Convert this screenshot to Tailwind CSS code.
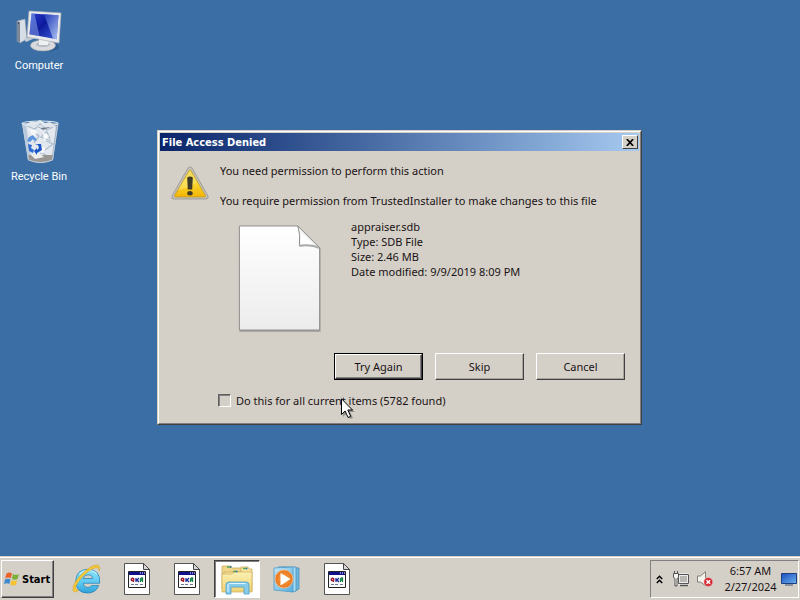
<!DOCTYPE html>
<html lang="en">
<head>
<meta charset="utf-8">
<meta name="viewport" content="width=device-width, initial-scale=1">
<title>File Access Denied</title>
<script src="https://cdn.jsdelivr.net/npm/@tailwindcss/browser@4"></script>
</head>
<body class="flex min-h-screen flex-col overflow-hidden bg-[#3a6ea5] font-['Noto_Sans',sans-serif] text-[11px] leading-[15px] text-[#1a1214]">

<svg class="absolute h-0 w-0" aria-hidden="true">
  <defs>
    <linearGradient id="page" x1="0" y1="0" x2="0" y2="1"><stop offset="0" stop-color="#fff"/><stop offset="1" stop-color="#ececed"/></linearGradient>
    <linearGradient id="screen" x1="0" y1="0" x2="1" y2="1"><stop offset="0" stop-color="#2a3fd0"/><stop offset=".45" stop-color="#0c1a9c"/><stop offset="1" stop-color="#3e62dc"/></linearGradient>
    <linearGradient id="shine" x1="0" y1="0" x2="1" y2="1"><stop offset="0" stop-color="#2848c8"/><stop offset="1" stop-color="#d5e6fb"/></linearGradient>
    <linearGradient id="warn" x1="0" y1="0" x2="0" y2="1"><stop offset="0" stop-color="#e9c83a"/><stop offset=".5" stop-color="#fbd630"/><stop offset="1" stop-color="#f2b405"/></linearGradient>
    <linearGradient id="glass" x1="0" y1="0" x2="1" y2="0"><stop offset="0" stop-color="#b9c9da"/><stop offset=".5" stop-color="#e8eef4"/><stop offset="1" stop-color="#98a9bb"/></linearGradient>
    <linearGradient id="ie" x1="0" y1="0" x2="0" y2="1"><stop offset="0" stop-color="#8de2fa"/><stop offset=".6" stop-color="#5cc8f0"/><stop offset="1" stop-color="#2f9fd8"/></linearGradient>
    <linearGradient id="folder" x1="0" y1="0" x2="0" y2="1"><stop offset="0" stop-color="#fdf0b4"/><stop offset="1" stop-color="#eed273"/></linearGradient>
    <linearGradient id="media" x1="0" y1="0" x2="1" y2="1"><stop offset="0" stop-color="#c4e8f8"/><stop offset="1" stop-color="#56aede"/></linearGradient>
    <linearGradient id="mini" x1="0" y1="0" x2="1" y2="1"><stop offset="0" stop-color="#1b4ec0"/><stop offset="1" stop-color="#6ab2ee"/></linearGradient>
    <radialGradient id="orange"><stop offset="0" stop-color="#f9a64d"/><stop offset="1" stop-color="#e8751a"/></radialGradient>
    <symbol id="script-file" viewBox="0 0 26 32">
      <path d="M.5.5h19l6 6v25H.5z" fill="#fff" stroke="#555"/>
      <path d="M19.500.5v6h6z" fill="#d8d8d8" stroke="#444"/>
      <path d="M4.500 8.500h17v16h-17z" fill="#fff" stroke="#222"/>
      <path d="M5 9h16v3H5z" fill="#10108a"/>
      <path d="M16 10h1m1 0h1m1 0h1" stroke="#fff"/>
      <circle cx="8.500" cy="16.500" r="1.300" fill="none" stroke="#a31828" stroke-width="1.400"/>
      <path d="M9.500 15v4" stroke="#a31828" stroke-width="1.200"/>
      <path d="M12 15v4m3-4-2 2 2 2" fill="none" stroke="#152898" stroke-width="1.300"/>
      <path d="M16.500 19v-3l1-1h1v4m-2-2h2" fill="none" stroke="#158048" stroke-width="1.300"/>
      <path d="M7 21.500h3m1 0h3m2 0h3" stroke="#6878a0"/>
    </symbol>
  </defs>
</svg>

<main class="relative flex-1">
  <nav class="flex w-[78px] flex-col gap-[38px] pt-2 text-center font-[Roboto,sans-serif] text-white" aria-label="Desktop">
    <a href="#computer" class="flex flex-col items-center gap-[2px]">
      <svg class="h-12 w-12" viewBox="0 0 48 48" aria-hidden="true">
        <path d="m2 13 8-2 2 20-7 4-3-2z" fill="#d7dde5" stroke="#8b98aa" stroke-width=".6"/>
        <path d="m2 13 3 1v21l-3-2z" fill="#7c8899"/>
        <path d="m3 15 1 .3" stroke="#222"/>
        <path d="m9 31 8-3 3 2-9 4z" fill="#c3cbd4"/>
        <ellipse cx="31" cy="39" rx="13" ry="4.500" fill="#234f80" opacity=".55"/>
        <ellipse cx="28" cy="37.500" rx="12.500" ry="5.500" fill="#d9dadd" stroke="#a3a9b0" stroke-width=".6"/>
        <ellipse cx="28" cy="36.500" rx="7" ry="2.500" fill="#b5bbc3"/>
        <path d="m24 29 10 2-1 6h-9z" fill="#eef0f2"/>
        <path d="m14 3 32 2-2 30-32-6z" fill="#e8e9ec" stroke="#aeb3bd" stroke-width=".7"/>
        <path d="m16.500 5.500 27 1.800-1.800 24-27.200-5z" fill="url(#screen)"/>
        <path d="m29 6.300 14.500 1-1.800 24-3.700-.7z" fill="url(#shine)" opacity=".75"/>
        <path d="m16.500 5.500 3 .2 5 22.400-10-1.800z" fill="#8fb0f0" opacity=".5"/>
      </svg>
      <span>Computer</span>
    </a>
    <a href="#recycle-bin" class="flex flex-col items-center gap-[2px]">
      <svg class="mt-2 ml-[3px] h-12 w-12" viewBox="0 0 48 48" aria-hidden="true">
        <path d="m5 4 36 0-5 37q-12 6-25 0z" fill="url(#glass)" opacity=".92"/>
        <path d="M9 6q4-5 10-3l4-2 5 3 5-1 6 5-4 28q-10 5-21 0z" fill="#e3e8ee"/>
        <path d="m10 7 8 3 5-5 7 6 6-3M30 12l-6 6 10 4m-20-10 8 5-5 7m12-2 7 3-8 6m2-18 3 7m-16 19 8-5 7 4" fill="none" stroke="#aebdcc" stroke-width="1.300"/>
        <path d="m17 5 7 4 10-1-8 3z" fill="#707b8d"/>
        <path d="m12 10 8 2-3 8zm14 3 6 4-5 5zm-4 14 7 2-4 6z" fill="#fff" opacity=".8"/>
        <path d="m11 36 25 0-.5 5q-12 5-24 0z" fill="#9a9694"/>
        <path d="m14 36 8-2 5 4-9 2z" fill="#eee"/>
        <path d="m12 18 4-2 4 5-3 1-1-2-3 3-3-1z" fill="#5c94de"/>
        <path d="m18 25 6 0 1 6-5 3v2l-3-4 3-3 0 2 2-2-1-3z" fill="#1b55c8"/>
        <path d="m11 25 4 1-1 3 3 2-1 3-4-2z" fill="#2e6cd3"/>
        <ellipse cx="23" cy="4.500" rx="18" ry="2.500" fill="none" stroke="#dce6ef" stroke-width="1.200"/>
        <path d="m5.500 5 6 36q12 5 24 0L41 5" fill="none" stroke="#c3d0dc"/>
      </svg>
      <span>Recycle Bin</span>
    </a>
  </nav>

  <section role="dialog" aria-labelledby="dlg-title" class="absolute top-[130px] left-[157px] w-[485px] border border-t-[#d4d0c8] border-r-[#404040] border-b-[#404040] border-l-[#d4d0c8] bg-[#d4d0c8]">
    <div class="border border-t-white border-r-[#808080] border-b-[#808080] border-l-white p-px">
      <header class="flex h-[18px] items-center justify-between bg-linear-to-r from-[#0a246a] to-[#a6caf0] pr-px pl-[2px]">
        <h1 id="dlg-title" class="font-['DejaVu_Sans_Condensed','Noto_Sans',sans-serif] text-[11px] font-bold text-white">File Access Denied</h1>
        <button type="button" aria-label="Close" class="flex h-[14px] w-4 items-center justify-center border border-t-white border-r-[#404040] border-b-[#404040] border-l-white bg-[#d4d0c8]">
          <svg class="h-[7px] w-2" viewBox="0 0 8 7" aria-hidden="true"><path d="m.8 0 6.400 7M7.200 0 .8 7" stroke="#000" stroke-width="1.700"/></svg>
        </button>
      </header>
      <div class="flex px-[11px] pt-[12px] pb-[14px]">
        <svg class="mt-[2px] h-[36px] w-[38px] shrink-0" viewBox="0 0 38 36" aria-hidden="true">
          <path d="M17 3q2-2.500 4 0l16 28q1 3-2 3H3q-3 0-2-3z" fill="#c4c3bc" stroke="#94928a" stroke-width=".8"/>
          <path d="M18 5.500q1-1.500 2 0l14.500 25q.5 1.500-1 1.500h-29q-1.500 0-1-1.500z" fill="url(#warn)" stroke="#b8902a" stroke-width=".7"/>
          <path d="m19 5 7 12q-8 6-19 8z" fill="#fff3a0" opacity=".35"/>
          <path d="M16.200 12.500q2.800-1.800 5.600 0l-.6 12h-4.400z" fill="#3f3a27"/>
          <ellipse cx="19" cy="28.300" rx="2.700" ry="2.200" fill="#3f3a27"/>
        </svg>
        <div class="ml-[11px] flex-1">
          <p>You need permission to perform this action</p>
          <p class="mt-[15px]">You require permission from TrustedInstaller to make changes to this file</p>
          <div class="mt-[11px] flex gap-[29px] pl-[18px]">
            <svg class="mt-[6px] h-[109px] w-[84px] shrink-0" viewBox="0 0 84 110" aria-hidden="true">
              <path d="M1 2h60l22 22v84H1z" fill="#77756f" opacity=".45"/>
              <path d="M1 1h59l22 22v83H1z" fill="url(#page)" stroke="#8c8c8a"/>
              <path d="M60 1q3 9 1.500 20Q73 19.500 82 23z" fill="#f5f5f5" stroke="#8c8c8a"/>
              <path d="M63 8v12q6-1 13 0z" fill="#fff"/>
              <path d="M61.500 21q11-1.500 20 2" fill="none" stroke="#aaa" stroke-width="2"/>
            </svg>
            <div>
              <p>appraiser.sdb</p>
              <p>Type: SDB File</p>
              <p>Size: 2.46 MB</p>
              <p>Date modified: 9/9/2019 8:09 PM</p>
            </div>
          </div>
          <div class="mt-[19px] flex justify-end gap-3 pr-[3px]">
            <button type="button" class="h-[27px] w-[89px] border border-black"><span class="flex h-full items-center justify-center border border-t-white border-r-[#404040] border-b-[#404040] border-l-white shadow-[inset_-1px_-1px_#808080]">Try Again</span></button>
            <button type="button" class="h-[27px] w-[89px] border border-t-white border-r-[#404040] border-b-[#404040] border-l-white shadow-[inset_-1px_-1px_#a8a59f]">Skip</button>
            <button type="button" class="h-[27px] w-[89px] border border-t-white border-r-[#404040] border-b-[#404040] border-l-white shadow-[inset_-1px_-1px_#a8a59f]">Cancel</button>
          </div>
          <div class="mt-[13px] -ml-[2px] flex items-center gap-[5px]">
            <input id="all" type="checkbox" class="h-[13px] w-[13px] appearance-none border border-t-[#606060] border-r-white border-b-white border-l-[#606060] bg-[#d4d0c8] shadow-[inset_1px_1px_#808080] checked:bg-[#404040]">
            <label for="all">Do this for all current items (5782 found)</label>
          </div>
        </div>
      </div>
    </div>
  </section>

  <svg class="pointer-events-none absolute top-[398px] left-[341px] h-[21px] w-[14px]" viewBox="0 0 14 21" aria-hidden="true">
    <path d="M2 3v16l4-4 3 6 3-1-3-6h5z" fill="#000" opacity=".3"/>
    <path d="M.5.8v15.700l3.600-3.500 3 6.500 2.600-1.200-2.900-6.300h4.700z" fill="#fff" stroke="#000"/>
  </svg>
</main>

<footer class="border-t border-[#d4d0c8]">
  <div class="flex items-start justify-between border-t border-white bg-[#d4d0c8] px-px pt-[2px] pb-[2px]">
    <div class="flex items-start">
      <button type="button" class="flex h-[38px] w-[53px] items-center gap-[2px] border border-t-white border-r-[#404040] border-b-[#404040] border-l-white pl-[2px] font-['DejaVu_Sans_Condensed','Noto_Sans',sans-serif] text-[11px] font-bold text-black shadow-[inset_-1px_-1px_#808080]">
        <svg class="h-4 w-4 shrink-0" viewBox="0 0 16 16" aria-hidden="true">
          <path d="M2.500 2.500q3-2 5.500 0L6.800 7.300q-3-1.500-5.600.2z" fill="#e8622a"/>
          <path d="M9 3q3 1.700 6 0l-1.400 5q-3 1.500-5.700-.2z" fill="#7dae38"/>
          <path d="M1 8.600q2.800-1.800 5.500-.1l-1.200 4.600q-2.700-1.600-5.300.2z" fill="#3e88cc"/>
          <path d="M7.600 9q2.800 1.700 5.600.1l-1.300 4.700q-2.900 1.500-5.500-.2z" fill="#f5c22b"/>
        </svg>
        Start
      </button>
      <nav class="ml-2.5 flex gap-1" aria-label="Taskbar">
        <button type="button" aria-label="Internet Explorer" class="flex h-[38px] w-[46px] items-center justify-center">
          <svg class="h-[30px] w-[30px]" viewBox="0 0 32 32" aria-hidden="true">
            <path d="M29.500 20.500H12q.5 4.500 5 4.500 2.800 0 4-2h7.500Q25.500 31 16.500 31 4 30.500 4 18 4.500 6 17 5.500 31 6.500 29.500 20.500zM12 15.500h10q-.3-4-5-4-4.500 0-5 4z" fill="url(#ie)" stroke="#2280b8" stroke-width=".8"/>
            <path d="M8 11q4-4.500 10-4 6 .5 8.500 4" fill="none" stroke="#c9f4ff" stroke-width="1.200"/>
            <path d="M7 28q-5 4-6-.5-.5-6 8-15.500Q19 2 26 1q5 0 3 6.500 0-4.500-4-3.500-7 2-14.500 10.500Q3 23 4 26.500q.5 1.500 3 1.500z" fill="#f5c838" stroke="#d29a1c" stroke-width=".5"/>
          </svg>
        </button>
        <button type="button" aria-label="Script file 1" class="flex h-[38px] w-[46px] items-center justify-center"><svg class="h-8 w-[26px]" aria-hidden="true"><use href="#script-file"/></svg></button>
        <button type="button" aria-label="Script file 2" class="flex h-[38px] w-[46px] items-center justify-center"><svg class="h-8 w-[26px]" aria-hidden="true"><use href="#script-file"/></svg></button>
        <button type="button" aria-label="Windows Explorer" class="flex h-[38px] w-[46px] items-center justify-center border border-t-[#404040] border-r-white border-b-white border-l-[#404040] bg-white shadow-[inset_1px_1px_#808080]">
          <svg class="h-8 w-8" viewBox="0 0 32 32" aria-hidden="true">
            <path d="M1 6V4q0-1 1-1h8l1 2h12q1 0 1 1v20H1z" fill="#eed68a" stroke="#c8a548" stroke-width=".7"/>
            <path d="M3 9h17V4h7l1 2h3v22H3z" fill="#f6e4a0" stroke="#c8a548" stroke-width=".7"/>
            <path d="M1 11h10l2-2h18v20H1z" fill="url(#folder)" stroke="#cfae55" stroke-width=".7"/>
            <path d="M6 4h4M12 8.500h4M22 5.500h4" stroke="#4fa55a" stroke-width="1.500"/>
            <path d="M9 4h1.500M15 8.500h1.500M25 5.500h1.500" stroke="#3b78c8" stroke-width="1.500"/>
            <path d="M5 31V22q0-3 3-3h17q3 0 3 3v9h-5v-6q0-1-1-1H11q-1 0-1 1v6z" fill="#86cbe9" stroke="#4a9ec8" stroke-width=".8"/>
            <path d="M7 29v-7q0-1.500 1.500-1.500h16" fill="none" stroke="#dff5ff"/>
          </svg>
        </button>
        <button type="button" aria-label="Media Player" class="flex h-[38px] w-[46px] items-center justify-center">
          <svg class="h-7 w-7" viewBox="0 0 28 28" aria-hidden="true">
            <path d="m8 2 18 1v21l-4 2z" fill="#70b8e0" stroke="#3a86b6" stroke-width=".7"/>
            <path d="m5 2 18 0v24l-4 1z" fill="#a9dbf2" stroke="#3a86b6" stroke-width=".7"/>
            <path d="m1 3 19-1v25L1 25z" fill="url(#media)" stroke="#4a9bc8" stroke-width=".8"/>
            <circle cx="11" cy="14" r="9" fill="url(#orange)" stroke="#f3b27c"/>
            <path d="m7.500 8 10 6-10 6.500z" fill="#fff"/>
          </svg>
        </button>
        <button type="button" aria-label="Script file 3" class="flex h-[38px] w-[46px] items-center justify-center"><svg class="h-8 w-[26px]" aria-hidden="true"><use href="#script-file"/></svg></button>
      </nav>
    </div>
    <div class="flex h-[38px] items-center border border-t-[#808080] border-r-white border-b-white border-l-[#808080] pr-px pl-[5px]">
      <button type="button" aria-label="Show hidden icons" class="flex h-4 w-2 items-center">
        <svg class="h-[9px] w-[7px]" viewBox="0 0 7 9" aria-hidden="true"><path d="m.8 4 2.700-2.700L6.200 4M.8 8l2.700-2.700L6.200 8" fill="none" stroke="#000" stroke-width="1.500"/></svg>
      </button>
      <svg class="ml-[9px] h-4 w-4" viewBox="0 0 16 16" role="img" aria-label="Network">
        <path d="M5.500 3.500h10v9h-10z" fill="#b9b7b1" stroke="#fff" stroke-width="2"/>
        <path d="M5.500 3.500h10v9h-10z" fill="#b9b7b1" stroke="#555"/>
        <path d="M6.500 4.500h8v7h-8z" fill="none" stroke="#eee"/>
        <path d="M7 14.500h8" stroke="#555" stroke-width="1.500"/>
        <path d="M.5 2.500h5v4l-1.500 1v7.500H2V7.500l-1.500-1z" fill="#f4f4f0" stroke="#555"/>
        <path d="M1.500 0v2.500m3-2.500v2.500" stroke="#555"/>
      </svg>
      <svg class="ml-2 h-4 w-4" viewBox="0 0 16 16" role="img" aria-label="Volume muted">
        <path d="M.5 5h3L8.500.7v14L3.500 11h-3z" fill="#f4f3ee" stroke="#77756e" stroke-width=".9"/>
        <circle cx="11.300" cy="11" r="4.500" fill="#d62c34" stroke="#f0c4c4" stroke-width=".6"/>
        <path d="m9.500 9.200 3.600 3.600m0-3.600-3.600 3.600" stroke="#fff" stroke-width="1.500"/>
      </svg>
      <time datetime="2024-02-27T06:57" class="ml-[11px] w-[53px] text-center leading-4 whitespace-nowrap">6:57 AM<br>2/27/2024</time>
      <button type="button" aria-label="Show desktop" class="ml-1 h-[14px] w-4">
        <svg class="h-[14px] w-4" viewBox="0 0 16 14" aria-hidden="true"><path d="M.5 1.500h15v10H.5z" fill="url(#mini)" stroke="#1d3f80"/><path d="M4 13h8" stroke="#6f7b8c" stroke-width="1.500"/></svg>
      </button>
    </div>
  </div>
</footer>
</body>
</html>
